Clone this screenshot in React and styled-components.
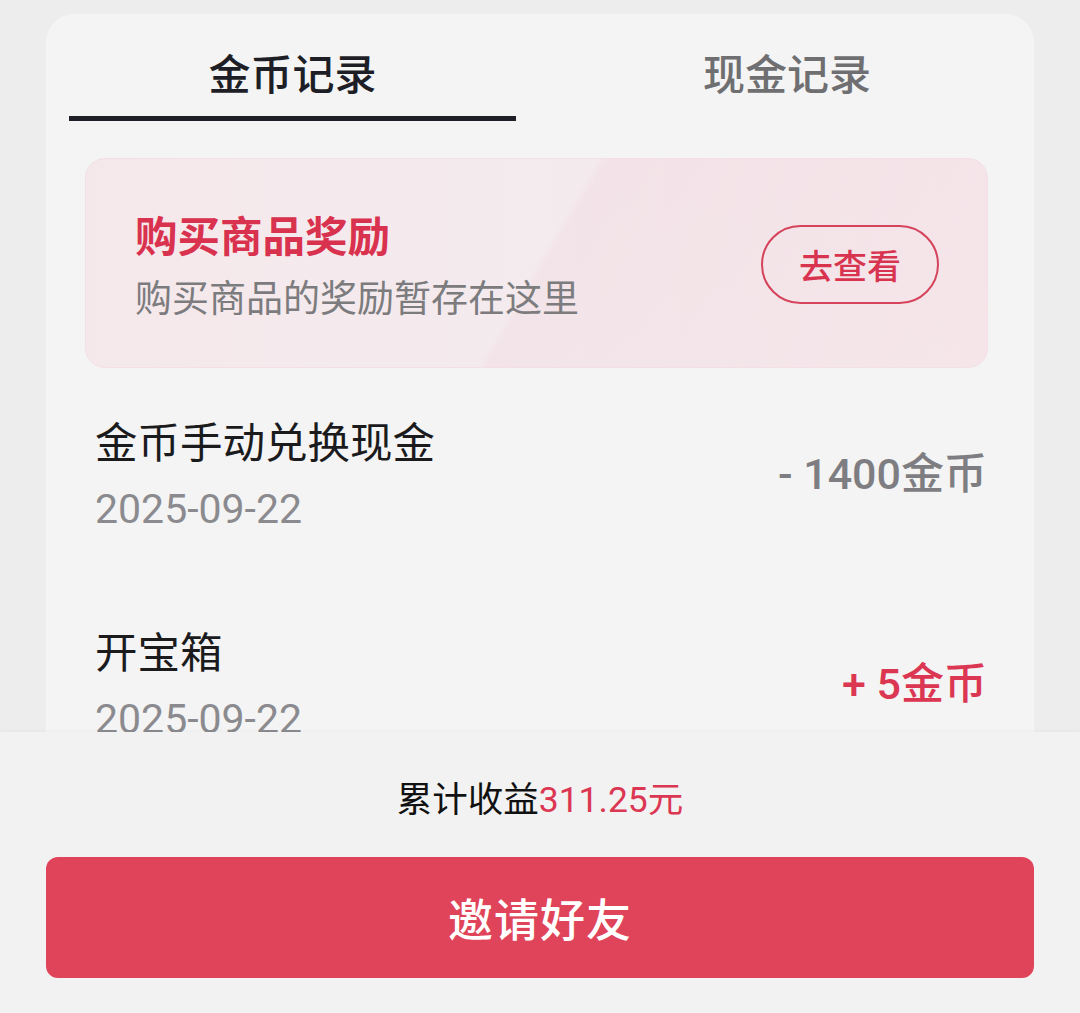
import React from "react";
import styled, { createGlobalStyle } from "styled-components";

const GlobalStyle = createGlobalStyle`
  html, body { margin: 0; padding: 0; }
  body {
    background: #ededed;
    font-family: "Roboto", "Noto Sans CJK SC", sans-serif;
    -webkit-font-smoothing: antialiased;
  }
`;

const Page = styled.div`
  position: relative;
  height: 1013px;
  overflow: hidden;
  background: #ededed;
  padding: 14px 46px 0;
  box-sizing: border-box;
`;

const Card = styled.div`
  background: #f4f4f4;
  border-radius: 28px;
  padding: 30px 0 0;
  height: 1100px;
  box-sizing: border-box;
`;

const Tabs = styled.div`
  display: grid;
  grid-template-columns: 447px 448px;
  justify-content: space-between;
  padding: 0 23px;
`;

const Tab = styled.div`
  display: flex;
  flex-direction: column;
  align-items: center;
  font-family: "Noto Sans CJK SC", sans-serif;
  font-size: 42px;
  line-height: 56px;
  font-weight: 500;
  color: ${(p) => (p.$active ? "#1d1e26" : "#6f6f72")};
  &::after {
    content: "";
    margin-top: 16px;
    width: 100%;
    height: 5px;
    background: ${(p) => (p.$active ? "#1d1e26" : "transparent")};
  }
`;

const Promo = styled.div`
  margin: 37px 46px 0 39px;
  height: 210px;
  box-sizing: border-box;
  border-radius: 20px;
  border: 1.5px solid #f3dfe4;
  background:
    linear-gradient(120deg, rgba(255,255,255,0) 0%, rgba(255,255,255,0) 50%, rgba(240,214,222,0.35) 51%, rgba(245,226,231,0.15) 100%),
    linear-gradient(90deg, #f5e8eb 0%, #f4ebee 50%, #f5e6ea 100%);
  display: flex;
  align-items: center;
  justify-content: space-between;
  padding: 0 48px 0 49px;
`;

const PromoText = styled.div`
  display: flex;
  flex-direction: column;
  gap: 8px;
  margin-top: 2px;
`;

const PromoTitle = styled.div`
  font-family: "Noto Sans CJK SC", sans-serif;
  font-size: 42.5px;
  line-height: 56px;
  font-weight: 700;
  color: #d9324f;
`;

const PromoSub = styled.div`
  font-family: "Noto Sans CJK SC", sans-serif;
  font-size: 37px;
  line-height: 52px;
  color: #7c7c7e;
`;

const OutlineButton = styled.button`
  width: 178px;
  height: 79px;
  margin-top: 2px;
  border: 2.5px solid #d5445b;
  border-radius: 40px;
  background: transparent;
  color: #d8344f;
  font-family: "Noto Sans CJK SC", sans-serif;
  font-size: 34px;
  font-weight: 500;
  padding: 0;
`;

const List = styled.div`
  padding: 0 47px 0 49px;
`;

const Row = styled.div`
  display: flex;
  align-items: center;
  justify-content: space-between;
  padding: 47px 0 45px;
`;

const RowInfo = styled.div`
  display: flex;
  flex-direction: column;
  gap: 20px;
`;

const RowTitle = styled.div`
  font-family: "Noto Sans CJK SC", sans-serif;
  font-size: 42.5px;
  line-height: 50px;
  color: #1b1b1d;
`;

const RowDate = styled.div`
  font-family: "Roboto", sans-serif;
  font-size: 41px;
  line-height: 48px;
  color: #8b8b8f;
`;

const Amount = styled.div`
  font-family: "Roboto", "Noto Sans CJK SC", sans-serif;
  font-size: 43px;
  font-weight: 500;
  margin-top: -8px;
  color: ${(p) => (p.$positive ? "#dc3752" : "#7e7e82")};
`;

const Footer = styled.div`
  position: absolute;
  left: 0;
  right: 0;
  bottom: 0;
  height: 281px;
  background: #f2f2f2;
  box-shadow: 0 -1px 3px rgba(0, 0, 0, 0.04);
  display: flex;
  flex-direction: column;
  align-items: center;
  padding: 46px 46px 0;
  box-sizing: border-box;
`;

const Summary = styled.div`
  font-family: "Roboto", "Noto Sans CJK SC", sans-serif;
  font-size: 35.5px;
  line-height: 44px;
  color: #111;
`;

const SummaryValue = styled.span`
  color: #dc3752;
`;

const PrimaryButton = styled.button`
  margin-top: 35px;
  width: 100%;
  height: 121px;
  border: none;
  border-radius: 12px;
  background: #e0445a;
  color: #fff;
  font-family: "Noto Sans CJK SC", sans-serif;
  font-size: 45px;
  font-weight: 500;
  letter-spacing: 1px;
`;

const records = [
  { title: "金币手动兑换现金", date: "2025-09-22", amount: "- 1400金币", positive: false },
  { title: "开宝箱", date: "2025-09-22", amount: "+ 5金币", positive: true },
];

export default function App() {
  return (
    <>
      <GlobalStyle />
      <Page>
        <Card>
          <Tabs>
            <Tab $active>金币记录</Tab>
            <Tab>现金记录</Tab>
          </Tabs>
          <Promo>
            <PromoText>
              <PromoTitle>购买商品奖励</PromoTitle>
              <PromoSub>购买商品的奖励暂存在这里</PromoSub>
            </PromoText>
            <OutlineButton>去查看</OutlineButton>
          </Promo>
          <List>
            {records.map((r, i) => (
              <Row key={i}>
                <RowInfo>
                  <RowTitle>{r.title}</RowTitle>
                  <RowDate>{r.date}</RowDate>
                </RowInfo>
                <Amount $positive={r.positive}>{r.amount}</Amount>
              </Row>
            ))}
          </List>
        </Card>
        <Footer>
          <Summary>
            累计收益<SummaryValue>311.25元</SummaryValue>
          </Summary>
          <PrimaryButton>邀请好友</PrimaryButton>
        </Footer>
      </Page>
    </>
  );
}
